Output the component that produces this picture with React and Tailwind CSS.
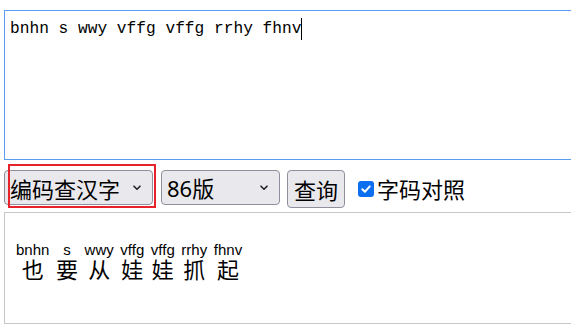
import React from "react";

const Chevron = () => (
  <svg width="8" height="6" viewBox="0 0 8 6" className="shrink-0">
    <path d="M1 1.2 L4 4.2 L7 1.2" fill="none" stroke="#222" strokeWidth="1.6" strokeLinecap="round" strokeLinejoin="round" />
  </svg>
);

const items = [
  ["bnhn", "也"],
  ["s", "要"],
  ["wwy", "从"],
  ["vffg", "娃"],
  ["vffg", "娃"],
  ["rrhy", "抓"],
  ["fhnv", "起"],
];

export default function App() {
  const cjk = { fontFamily: '"Noto Sans CJK SC", "Noto Sans", sans-serif' };
  return (
    <div className="w-[571px] h-[329px] overflow-hidden bg-white relative">
      <div className="pl-[4px] pt-[10px] w-[640px]">
        <div
          className="h-[150px] w-[600px] border border-[#5b9bf0] bg-white pl-[5px] pt-[8px] text-[16.2px] leading-[20px] text-black flex items-start"
          style={{ fontFamily: '"Liberation Mono", monospace' }}
        >
          <span>bnhn s wwy vffg vffg rrhy fhnv</span>
          <span className="inline-block w-px h-[22px] bg-black -mt-[1px]"></span>
        </div>

        <div className="flex items-start mt-[9px] text-[22px] leading-none text-black" style={cjk}>
          <div className="w-[149px] h-[35px] mt-[1px] rounded-[4px] border border-[#8f8f9d] bg-[#e9e9ed] flex items-center pl-[5px] pr-[11px] justify-between">
            <span>编码查汉字</span>
            <Chevron />
          </div>
          <div className="w-[119px] h-[35px] mt-[1px] ml-[8px] rounded-[4px] border border-[#8f8f9d] bg-[#e9e9ed] flex items-center pl-[5px] pr-[11px] justify-between">
            <span style={{ fontFamily: '"Noto Sans", "Noto Sans CJK SC", sans-serif' }}>86<span style={cjk}>版</span></span>
            <Chevron />
          </div>
          <div className="w-[58px] h-[38px] mt-[1px] ml-[7px] rounded-[4px] border border-[#8f8f9d] bg-[#e9e9ed] flex items-center justify-center">
            <span>查询</span>
          </div>
          <div className="ml-[13px] h-[38px] flex items-center">
            <span className="w-[16px] h-[16px] mt-[2px] rounded-[3px] bg-[#0b6ff0] flex items-center justify-center">
              <svg width="12" height="12" viewBox="0 0 12 12">
                <path d="M2.3 6.2 L4.9 8.7 L9.8 3.4" fill="none" stroke="white" strokeWidth="2" strokeLinecap="round" strokeLinejoin="round" />
              </svg>
            </span>
            <span className="ml-[3px]">字码对照</span>
          </div>
        </div>

        <div className="mt-[4px] w-[600px] h-[112px] border border-[#c8c8c8] bg-white pl-[11px] pt-[29px]">
          <div className="flex gap-[6.6px]">
            {items.map(([code, ch], i) => (
              <div key={i} className="flex flex-col items-center">
                <span className="text-[15px] leading-[15px] text-black" style={{ fontFamily: '"Liberation Sans", Arial, sans-serif' }}>{code}</span>
                <span className="text-[22px] leading-[22px] text-black" style={cjk}>{ch}</span>
              </div>
            ))}
          </div>
        </div>
      </div>
      <div className="absolute left-[8px] top-[164px] w-[148px] h-[44px] border-2 border-[#e8222a] pointer-events-none"></div>
    </div>
  );
}
